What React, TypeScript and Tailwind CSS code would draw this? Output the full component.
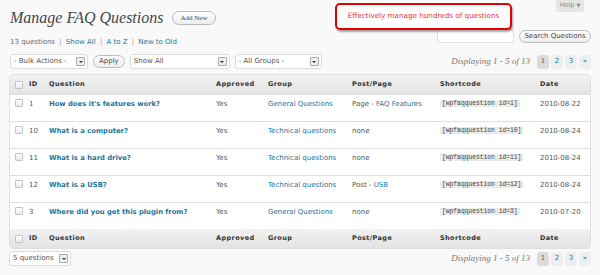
import React from 'react';

const rows = [
  { id: '1', q: "How does it's features work?", group: 'General Questions', post: ['Page - ', 'FAQ Features'], date: '2010-08-22' },
  { id: '10', q: 'What is a computer?', group: 'Technical questions', post: ['none', ''], date: '2010-08-24' },
  { id: '11', q: 'What is a hard drive?', group: 'Technical questions', post: ['none', ''], date: '2010-08-24' },
  { id: '12', q: 'What is a USB?', group: 'Technical questions', post: ['Post - ', 'USB'], date: '2010-08-24' },
  { id: '3', q: 'Where did you get this plugin from?', group: 'General Questions', post: ['none', ''], date: '2010-07-20' },
];

function Check() {
  return <span className="block w-[8px] h-[8px] border border-[#c4c4c4] bg-gradient-to-b from-[#ffffff] to-[#e9e9e9] rounded-[1px]" />;
}

function Select({ label, w }: { label: string; w: string }) {
  return (
    <div className={`${w} h-[15px] flex items-center justify-between bg-white border border-[#dcdcdc] rounded-[3px] pl-[3px] pr-[2px] text-[#555]`}>
      <span>{label}</span>
      <span className="w-[9px] h-[9px] border border-[#aaa] bg-[#eee] rounded-[1px] flex items-center justify-center">
        <span className="w-0 h-0 border-l-[2px] border-r-[2px] border-t-[2px] border-l-transparent border-r-transparent border-t-[#333]" />
      </span>
    </div>
  );
}

function Pager() {
  return (
    <div className="flex items-center gap-[2px]">
      <span className="font-['Liberation_Serif'] italic text-[9px] text-[#777] mr-[5px]">Displaying 1 - 5 of 13</span>
      <span className="w-[12px] h-[14px] rounded-[3px] bg-[#dcdcdc] text-[#666] flex items-center justify-center">1</span>
      {['2', '3', '»'].map((n) => (
        <span key={n} className="w-[12px] h-[14px] rounded-[3px] bg-[#eeeeee] text-[#21759b] flex items-center justify-center">{n}</span>
      ))}
    </div>
  );
}

function HeadRow() {
  return (
    <tr className="h-[19px] bg-gradient-to-b from-[#f2f2f2] to-[#e3e3e3] text-[#333] font-bold tracking-[0.4px] text-[6.5px]">
      <th className="pl-[5px]"><Check /></th>
      <th className="text-left pl-[3px]">ID</th>
      <th className="text-left pl-[3px]">Question</th>
      <th className="text-left pl-[3px]">Approved</th>
      <th className="text-left pl-[3px]">Group</th>
      <th className="text-left pl-[3px]">Post/Page</th>
      <th className="text-left pl-[3px]">Shortcode</th>
      <th className="text-left pl-[3px]">Date</th>
    </tr>
  );
}

export default function App() {
  return (
    <div className="relative w-[600px] h-[275px] overflow-hidden bg-[#f9f9f9] font-['DejaVu_Sans',sans-serif] text-[7px] text-[#555]">
      <div className="absolute top-0 right-[16px] w-[28px] h-[12px] rounded-b-[3px] bg-[#e4e4e4] text-[#888] text-[6.5px] flex items-center justify-center gap-[2px]">
        Help <span className="text-[5px]">▼</span>
      </div>
      <div className="absolute left-[335px] top-[3px] w-[177px] h-[27px] border-[2.5px] border-[#e60000] rounded-[5px] bg-white shadow-[1px_2px_2px_rgba(0,0,0,0.35)] flex items-center justify-center text-[#e8333a] text-[7.2px]">
        Effectively manage hundreds of questions
      </div>

      <div className="px-[9px] pt-[7px]">
        <div className="h-[22px] flex items-center gap-[9px] pl-[1px]">
          <h2 className="font-['Liberation_Serif',serif] italic font-normal text-[16px] text-[#464646] leading-none">Manage FAQ Questions</h2>
          <span className="h-[14px] px-[7px] rounded-full border border-[#bbb] bg-gradient-to-b from-white to-[#ededed] font-['Liberation_Serif',serif] text-[7px] text-[#464646] flex items-center">Add New</span>
        </div>

        <div className="h-[18px] flex justify-between">
          <div className="self-end pl-[1px] leading-[9px] text-[#666]">
            13 questions <span className="text-[#999] mx-[2px]">|</span> <span className="text-[#21759b]">Show All</span>{' '}
            <span className="text-[#999] mx-[2px]">|</span> <span className="text-[#21759b]">A to Z</span>{' '}
            <span className="text-[#999] mx-[2px]">|</span> <span className="text-[#21759b]">New to Old</span>
          </div>
          <div className="flex items-start gap-[5px]">
            <span className="w-[77px] h-[14px] bg-white border border-[#dfdfdf] rounded-[3px]" />
            <span className="w-[72px] h-[13px] mt-[1px] rounded-full border border-[#bbb] bg-gradient-to-b from-white to-[#ededed] text-[#464646] flex items-center justify-center">Search Questions</span>
          </div>
        </div>

        <div className="mt-[7px] h-[15px] flex items-center justify-between">
          <div className="flex items-center gap-[5px] pl-[1px]">
            <Select label="- Bulk Actions -" w="w-[78px]" />
            <span className="h-[13px] px-[5px] rounded-full border border-[#bbb] bg-gradient-to-b from-white to-[#ededed] text-[#464646] flex items-center">Apply</span>
            <Select label="Show All" w="w-[100px]" />
            <Select label="- All Groups -" w="w-[87px]" />
          </div>
          <Pager />
        </div>

        <table className="mt-[5px] w-[582px] table-fixed border-separate border-spacing-0 border border-[#dfdfdf] rounded-[4px] overflow-hidden bg-white">
          <colgroup>
            <col className="w-[16px]" />
            <col className="w-[20px]" />
            <col className="w-[167px]" />
            <col className="w-[52px]" />
            <col className="w-[84px]" />
            <col className="w-[88px]" />
            <col className="w-[100px]" />
            <col />
          </colgroup>
          <thead>
            <HeadRow />
          </thead>
          <tbody>
            {rows.map((r) => (
              <tr key={r.id} className="h-[27px] align-top">
                <td className="pl-[5px] pt-[4px] border-t border-[#dfdfdf]"><Check /></td>
                <td className="pl-[3px] pt-[4px] border-t border-[#dfdfdf]">{r.id}</td>
                <td className="pl-[3px] pt-[4px] border-t border-[#dfdfdf] font-bold text-[#21759b] text-[6.8px]">{r.q}</td>
                <td className="pl-[3px] pt-[4px] border-t border-[#dfdfdf]">Yes</td>
                <td className="pl-[3px] pt-[4px] border-t border-[#dfdfdf] text-[#21759b]">{r.group}</td>
                <td className="pl-[3px] pt-[4px] border-t border-[#dfdfdf]">
                  {r.post[0]}<span className="text-[#21759b]">{r.post[1]}</span>
                </td>
                <td className="pl-[3px] pt-[3px] border-t border-[#dfdfdf]">
                  <span className="bg-[#eaeaea] px-[2px] font-['Liberation_Mono',monospace] text-[6.3px] text-[#444]">[wpfaqquestion id={r.id}]</span>
                </td>
                <td className="pl-[3px] pt-[4px] border-t border-[#dfdfdf]">{r.date}</td>
              </tr>
            ))}
          </tbody>
          <tfoot>
            <HeadRow />
          </tfoot>
        </table>

        <div className="mt-[2px] h-[15px] flex items-center justify-between">
          <Select label="5 questions" w="w-[62px]" />
          <Pager />
        </div>
      </div>
    </div>
  );
}
